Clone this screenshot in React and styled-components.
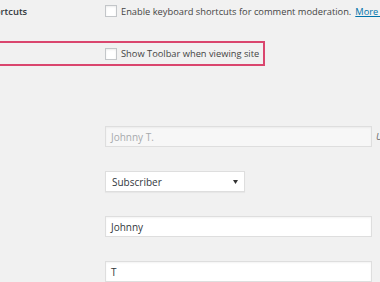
import React from "react";
import styled, { createGlobalStyle } from "styled-components";

const GlobalStyle = createGlobalStyle`
  html, body {
    margin: 0;
    padding: 0;
    background: #f1f1f1;
    overflow: hidden;
  }
  body {
    font-family: "Open Sans", "Noto Sans", sans-serif;
    color: #444;
  }
`;

const Form = styled.div`
  display: flex;
  flex-direction: column;
  width: 640px;
  margin-left: -62px;
`;

const Row = styled.div`
  display: flex;
  align-items: center;
  box-sizing: border-box;
  height: ${(p) => p.$h || 21}px;
  margin-top: ${(p) => p.$top || 0}px;
  white-space: nowrap;
  ${(p) => p.$highlight && `
    width: 327px;
    border: 2px solid #da466e;
  `}
`;

const Label = styled.div`
  width: ${(p) => p.$w || 167}px;
  flex-shrink: 0;
  font-size: 9.4px;
  font-weight: 600;
  color: #32373c;
`;

const CheckLabel = styled.label`
  display: flex;
  align-items: center;
  gap: 4px;
  font-size: 9.3px;
  color: #444;
`;

const Box = styled.span`
  display: inline-block;
  flex-shrink: 0;
  box-sizing: border-box;
  width: 12px;
  height: 12px;
  background: #fff;
  border: 1px solid #c3c6c9;
  box-shadow: inset 0 1px 2px rgba(0, 0, 0, 0.08);
`;

const More = styled.a`
  color: #0073aa;
  text-decoration: underline;
  margin-left: 4px;
`;

const Input = styled.div`
  box-sizing: border-box;
  flex-shrink: 0;
  width: 267px;
  height: 21px;
  display: flex;
  align-items: center;
  padding: 0 5px;
  font-size: 10px;
  background: ${(p) => (p.$disabled ? "#f7f7f7" : "#fff")};
  color: ${(p) => (p.$disabled ? "#a7aaad" : "#32373c")};
  border: 1px solid #dedede;
  box-shadow: inset 0 1px 2px rgba(0, 0, 0, 0.05);
`;

const Hint = styled.span`
  margin-left: 4px;
  font-size: 9.3px;
  font-style: italic;
  color: #666;
`;

const Select = styled.div`
  box-sizing: border-box;
  flex-shrink: 0;
  width: 140px;
  height: 21px;
  display: flex;
  align-items: center;
  justify-content: space-between;
  padding: 0 6px 0 6px;
  font-size: 10px;
  color: #32373c;
  background: #fff;
  border: 1px solid #dedede;
  box-shadow: 0 1px 1px rgba(0, 0, 0, 0.04);
`;

const Caret = () => (
  <svg width="5" height="4" viewBox="0 0 5 4">
    <path d="M0 0 L5 0 L2.5 4 Z" fill="#333" />
  </svg>
);

export default function App() {
  return (
    <>
      <GlobalStyle />
      <Form>
        <Row $h={22}>
          <Label>Keyboard Shortcuts</Label>
          <CheckLabel>
            <Box />
            <span>
              Enable keyboard shortcuts for comment moderation.
              <More href="#">More information</More>
            </span>
          </CheckLabel>
        </Row>
        <Row $h={25} $top={19} $highlight>
          <Label $w={165}>Toolbar</Label>
          <CheckLabel>
            <Box />
            <span>Show Toolbar when viewing site</span>
          </CheckLabel>
        </Row>
        <Row $top={60}>
          <Label>Username</Label>
          <Input $disabled>Johnny T.</Input>
          <Hint>Usernames cannot be changed.</Hint>
        </Row>
        <Row $top={24}>
          <Label>Role</Label>
          <Select>
            <span>Subscriber</span>
            <Caret />
          </Select>
        </Row>
        <Row $top={24}>
          <Label>First Name</Label>
          <Input>Johnny</Input>
        </Row>
        <Row $top={24}>
          <Label>Last Name</Label>
          <Input>T</Input>
        </Row>
      </Form>
    </>
  );
}
